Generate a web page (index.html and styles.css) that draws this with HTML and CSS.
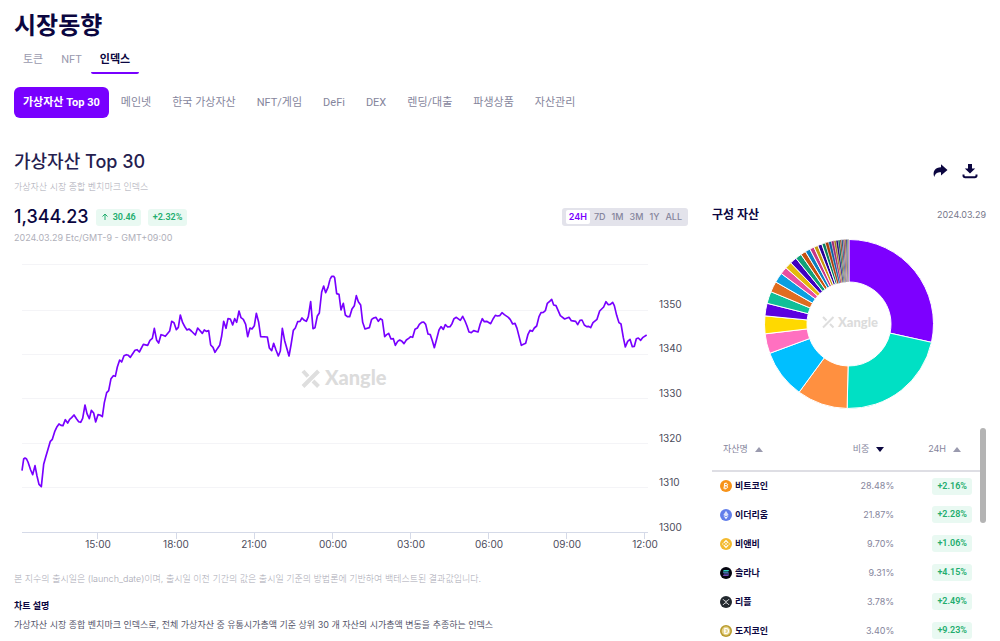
FILE: index.html
```html
<!DOCTYPE html>
<html lang="ko">
<head>
<meta charset="utf-8">
<meta name="viewport" content="width=device-width, initial-scale=1">
<title>시장동향</title>
<link rel="stylesheet" href="styles.css">
</head>
<body>
<header class="head">
  <h1 class="page-title">시장동향</h1>
  <nav class="tabs">
    <a class="tab" href="#token">토큰</a>
    <a class="tab" href="#nft">NFT</a>
    <a class="tab tab-active" href="#index">인덱스</a>
  </nav>
  <nav class="chips">
    <a class="chip chip-active" href="#top30">가상자산 Top 30</a>
    <a class="chip" href="#mainnet">메인넷</a>
    <a class="chip" href="#korea">한국 가상자산</a>
    <a class="chip" href="#game">NFT/게임</a>
    <a class="chip" href="#defi">DeFi</a>
    <a class="chip" href="#dex">DEX</a>
    <a class="chip" href="#lending">렌딩/대출</a>
    <a class="chip" href="#derivatives">파생상품</a>
    <a class="chip" href="#asset">자산관리</a>
  </nav>
</header>

<main class="content">
  <section class="index">
    <h2 class="index-title">가상자산 Top 30</h2>
    <p class="index-sub">가상자산 시장 종합 벤치마크 인덱스</p>
    <div class="price-row">
      <strong class="price">1,344.23</strong>
      <span class="badge"><svg class="up" viewBox="0 0 8 8"><path d="M4 7V1M1.500 3.500 4 1l2.500 2.500"/></svg>30.46</span>
      <span class="badge">+2.32%</span>
      <div class="ranges">
        <button class="range range-active">24H</button>
        <button class="range">7D</button>
        <button class="range">1M</button>
        <button class="range">3M</button>
        <button class="range">1Y</button>
        <button class="range">ALL</button>
      </div>
    </div>
    <p class="stamp">2024.03.29 Etc/GMT-9 - GMT+09:00</p>

    <svg class="chart" viewBox="0 0 674 306" role="img" aria-label="가상자산 Top 30 24H">
      <path class="grid" d="M8 14.5H634M8 60.5H634M8 104.5H634M8 148.5H634M8 193.5H634M8 237.5H634"/>
      <path class="axis" d="M8 282.5H634M83.5 282v7M162.5 282v7M240.5 282v7M318.5 282v7M396.5 282v7M474.5 282v7M552.5 282v7M630.5 282v7"/>
      <g class="mark" transform="translate(287 120)">
        <path class="mark-x" d="M2 1 7 6.500M12 11 17.500 16.500M17.500 1 2 16.500"/>
        <text class="mark-text" x="24" y="15">Xangle</text>
      </g>
      <svg width="674" height="306" viewBox="42 0 2022 918">
        <polyline class="line" points="66,662 71,627 75,624 79,626 84,636 92,660 98,674 105,647 111,678 117,703 124,710 131,643 138,618 144,598 151,574 157,568 164,545 170,532 177,522 183,526 189,527 196,509 203,519 209,508 215,503 222,495 230,507 236,515 242,517 248,505 255,465 261,491 268,506 274,481 281,489 287,516 294,494 300,495 307,500 313,458 320,428 326,422 333,386 340,377 346,379 352,351 359,330 365,336 372,317 379,314 385,316 391,322 405,301 411,299 418,306 430,283 443,286 450,271 457,265 463,235 470,271 476,279 483,254 489,256 496,259 509,243 515,214 522,218 529,239 535,232 541,195 548,218 555,231 561,240 567,237 574,243 586,255 593,234 607,250 613,240 619,244 626,242 632,285 639,292 645,307 652,296 659,286 665,258 671,214 678,235 684,206 691,207 698,225 704,206 710,217 717,183 723,203 730,208 737,223 743,260 750,234 756,237 763,227 769,190 776,217 782,260 802,261 808,294 815,302 821,280 828,300 835,318 841,303 847,235 854,272 867,318 873,285 880,241 886,234 893,215 900,214 906,204 913,211 919,214 925,200 932,155 939,236 945,233 952,198 958,189 965,126 971,108 977,128 984,112 990,88"/>
        <polyline class="line" transform="translate(990)" points="0,88 5,79 11,79 14,83 20,131 27,133 33,180 40,160 46,195 52,200 59,200 66,177 73,167 79,137 85,155 92,165 98,217 105,237 118,233 125,208 131,204 138,202 145,214 151,206 157,210 164,260 170,254 176,250 183,267 190,266 196,286 203,274 209,270 216,274 222,281 229,270 236,265 242,260 248,262 255,238 262,234 268,223 275,217 281,216 287,223 294,252 301,254 307,272 313,293 320,267 327,240 333,230 340,238 346,224 353,231 360,230 366,221 372,206 379,202 391,211 398,199 405,213 411,228 417,246 424,248 431,242 444,246 450,224 457,206 463,215 470,214 482,221 489,207 496,196 502,198 509,197 516,188 523,194 535,202 541,209 548,222 555,220 561,235 574,286 587,280 594,253 600,241 607,244 613,234 620,228 627,200 633,188 640,187 646,182 652,160 659,154 665,148 671,165 678,167 691,197 704,207 717,202 724,212 737,214 743,224 750,211 756,210 763,225 770,230 776,229 782,233 789,218 801,208 809,183 821,171 828,155 835,164 841,163 848,157 853,167 860,196 867,218 873,222 880,263 886,291 893,274 900,268 907,290 913,289 919,266 925,264 932,271 939,262 950,255"/>
      </svg>
      <g class="labels">
        <text x="645" y="58">1350</text><text x="645" y="102">1340</text><text x="645" y="147">1330</text><text x="645" y="192">1320</text><text x="645" y="236">1310</text><text x="645" y="281">1300</text>
      </g>
      <g class="labels labels-x">
        <text x="84" y="298">15:00</text><text x="162" y="298">18:00</text><text x="240" y="298">21:00</text><text x="319" y="298">00:00</text><text x="397" y="298">03:00</text><text x="475" y="298">06:00</text><text x="553" y="298">09:00</text><text x="631" y="298">12:00</text>
      </g>
    </svg>

    <p class="note">본 지수의 출시일은 (launch_date)이며, 출시일 이전 기간의 값은 출시일 기준의 방법론에 기반하여 백테스트된 결과값입니다.</p>
    <h3 class="about-title">차트 설명</h3>
    <p class="about">가상자산 시장 종합 벤치마크 인덱스로, 전체 가상자산 중 유통시가총액 기준 상위 30 개 자산의 시가총액 변동을 추종하는 인덱스</p>
  </section>

  <aside class="side">
    <div class="actions">
      <button class="action" aria-label="공유"><svg viewBox="0 0 16 16"><path d="M9 1.200 15.500 7 9 12.500V9.300C5.500 9.200 3.500 10.200 2.200 13.900.2 8 3.500 4.500 9 4.300Z"/></svg></button>
      <button class="action" aria-label="다운로드"><svg viewBox="0 0 16 16"><path d="M6 1h4v4.500h3.200L8 10.500 2.800 5.500H6Z"/><path class="tray" d="M1.500 11.500v1q0 1.700 1.700 1.700h9.600q1.700 0 1.700-1.700v-1"/></svg></button>
    </div>
    <div class="side-head">
      <h3 class="side-title">구성 자산</h3>
      <time class="side-date" datetime="2024-03-29">2024.03.29</time>
    </div>
    <svg class="donut" viewBox="0 0 170 170" role="img" aria-label="구성 자산 비중">
      <g id="slices" class="slices"></g>
      <g class="mark" transform="translate(58 77)">
        <path class="mark-x mark-x-small" d="M1 1 4.500 4.500M8 8 11.500 11.500M11.500 1 1 11.500"/>
        <text class="mark-text mark-text-small" x="16" y="11">Xangle</text>
      </g>
    </svg>
    <div class="assets">
      <table class="table">
        <thead>
          <tr>
            <th class="c-name"><button class="sort">자산명<span class="tri"></span></button></th>
            <th class="c-share"><button class="sort">비중<span class="tri tri-down"></span></button></th>
            <th class="c-day"><button class="sort">24H<span class="tri"></span></button></th>
          </tr>
        </thead>
        <tbody>
          <tr><td class="c-name"><span class="coin"><svg class="coin-icon" viewBox="0 0 12 12"><circle cx="6" cy="6" r="6" fill="#f7931a"/><path d="M4.700 3.200 4 8.600M4.500 3.400l2.200.3c1.500.3 1.200 2.200-.3 2.100L4.400 5.700l2.200.2c1.700.4 1.300 2.500-.5 2.400L3.800 8M6 2.500l-.2 1M5.300 8.500l-.2 1" fill="none" stroke="#fff"/></svg>비트코인</span></td><td class="c-share">28.48%</td><td class="c-day"><span class="badge">+2.16%</span></td></tr>
          <tr><td class="c-name"><span class="coin"><svg class="coin-icon" viewBox="0 0 12 12"><circle cx="6" cy="6" r="6" fill="#627eea"/><path d="M6 1.700 3.400 6.100 6 7.600l2.600-1.500Z" fill="#dfe5fb"/><path d="M3.400 6.800 6 10.300l2.600-3.500L6 8.300Z" fill="#fff"/></svg>이더리움</span></td><td class="c-share">21.87%</td><td class="c-day"><span class="badge">+2.28%</span></td></tr>
          <tr><td class="c-name"><span class="coin"><svg class="coin-icon" viewBox="0 0 12 12"><circle cx="6" cy="6" r="6" fill="#f3ba2f"/><path d="m3.800 4.900 2.200-2.200 2.200 2.200M3.800 7.100 6 9.300l2.200-2.200" fill="none" stroke="#fff" stroke-width="1.200"/><path d="m6 4.900 1.100 1.100L6 7.100 4.900 6ZM2.800 5.200l.8.800-.8.800L2 6ZM9.200 5.200l.8.800-.8.800-.8-.8Z" fill="#fff"/></svg>비앤비</span></td><td class="c-share">9.70%</td><td class="c-day"><span class="badge">+1.06%</span></td></tr>
          <tr><td class="c-name"><span class="coin"><svg class="coin-icon" viewBox="0 0 12 12"><circle cx="6" cy="6" r="6" fill="#050510"/><path d="M3.800 3.100h5.400L8.200 4.400H2.800Z" fill="#2fcfc0"/><path d="M2.800 5.300h5.400l1 1.300H3.800Z" fill="#5790e0"/><path d="M3.800 7.500h5.400L8.200 8.800H2.800Z" fill="#8c62e8"/></svg>솔라나</span></td><td class="c-share">9.31%</td><td class="c-day"><span class="badge">+4.15%</span></td></tr>
          <tr><td class="c-name"><span class="coin"><svg class="coin-icon" viewBox="0 0 12 12"><circle cx="6" cy="6" r="6" fill="#23292f"/><path d="m3 3.200 1.700 1.700q1.300 1.100 2.600 0L9 3.200M3 8.900l1.700-1.700q1.300-1.100 2.600 0L9 8.900" fill="none" stroke="#fff" stroke-width=".9"/></svg>리플</span></td><td class="c-share">3.78%</td><td class="c-day"><span class="badge">+2.49%</span></td></tr>
          <tr><td class="c-name"><span class="coin"><svg class="coin-icon" viewBox="0 0 12 12"><circle cx="6" cy="6" r="6" fill="#b99b2e"/><circle cx="6" cy="6" r="4.400" fill="#e6d38a"/><path d="M4.800 3.500h1.300c3.200 0 3.200 5 0 5H4.800ZM3.700 6h2.500" fill="none" stroke="#fff" stroke-width="1.100"/></svg>도지코인</span></td><td class="c-share">3.40%</td><td class="c-day"><span class="badge">+9.23%</span></td></tr>
        </tbody>
      </table>
      <span class="thumb"></span>
    </div>
  </aside>
</main>
<script src="script.js"></script>
</body>
</html>
```

FILE: styles.css
```css
* { box-sizing: border-box; }

body {
  margin: 0;
  padding: 9px 14px 0;
  overflow: hidden;
  background: #fff;
  color: #0b0640;
  font-family: Inter, "Noto Sans CJK KR", sans-serif;
  font-size: 9px;
  line-height: 16px;
}

h1, h2, h3, p { margin: 0; }
a { color: inherit; text-decoration: none; }
button {
  padding: 0;
  border: 0;
  background: none;
  color: inherit;
  font: inherit;
}

.page-title { font-size: 24px; line-height: 34px; font-weight: 700; }

.tabs, .chips { font-family: Roboto, "Noto Sans CJK KR", sans-serif; font-size: 11px; }
.tabs { display: flex; color: #9a9aae; }
.tab { padding: 9px 9px 4px; border-bottom: 2px solid transparent; line-height: 16px; }
.tab-active {
  border-bottom-color: #7800ff;
  border-radius: 2px;
  color: #0b0640;
  font-weight: 700;
}

.chips { display: flex; gap: 3px; margin-top: 13px; color: #85859c; }
.chip { padding: 8px 9px 7px; line-height: 16px; border-radius: 6px; white-space: nowrap; }
.chip-active { background: #7800ff; color: #fff; font-weight: 700; }

.content {
  display: grid;
  grid-template-columns: minmax(0, 1fr) 274px;
  gap: 24px;
  margin-top: 31px;
}

.index-title { font-size: 18px; line-height: 26px; font-weight: 500; color: #25204f; }
.index-sub { margin-top: 4px; color: #a9a9b4; font-weight: 300; }
.price-row { display: flex; align-items: center; gap: 7px; margin-top: 10px; }
.price { font-size: 18px; line-height: 24px; font-weight: 500; }

.badge {
  display: inline-flex;
  align-items: center;
  gap: 4px;
  padding: 0 5px;
  border-radius: 3px;
  background: #e9f9f2;
  color: #23ad6e;
  font-family: Roboto, sans-serif;
  font-weight: 600;
  line-height: 17px;
}
.up { width: 8px; height: 8px; fill: none; stroke: #23ad6e; }

.ranges {
  display: flex;
  gap: 2px;
  margin-left: auto;
  padding: 2px 4px;
  border-radius: 3px;
  background: #e3e3eb;
  color: #85859c;
  font-weight: 500;
}
.range { padding: 0 2px; border-radius: 2px; line-height: 14px; }
.range-active { padding: 0 3px; background: #fff; color: #7800ff; font-weight: 600; }

.stamp { margin-top: 1px; color: #b0b0ba; }

.chart { display: block; width: 100%; margin-top: 4px; }
.grid { fill: none; stroke: #f4f4f7; }
.axis { fill: none; stroke: #d5dae8; }
.line { fill: none; stroke: #7800ff; stroke-width: 5; stroke-linejoin: round; }
.labels { fill: #4c4c5c; font-size: 10px; }
.labels-x { text-anchor: middle; }
.mark-x { fill: none; stroke: #dedede; stroke-width: 4; }
.mark-x-small { stroke-width: 2; }
.mark-text { fill: #dcdcdc; font-family: Lato, sans-serif; font-size: 20px; font-weight: 900; }
.mark-text-small { font-size: 13px; }

.note { margin-top: 15px; color: #a9a9b4; font-weight: 300; }
.about-title { margin-top: 11px; font-size: 9px; font-weight: 700; }
.about { margin-top: 3px; color: #55556a; }

.actions { display: flex; justify-content: flex-end; gap: 14px; padding: 14px 8px 0 0; }
.action { width: 16px; height: 16px; }
.action svg { display: block; fill: #0b0640; }
.action .tray { fill: none; stroke: #0b0640; stroke-width: 2; }

.side-head { display: flex; align-items: center; justify-content: space-between; margin-top: 26px; }
.side-title { font-size: 12px; line-height: 20px; font-weight: 700; }
.side-date { color: #77778a; }

.donut { display: block; width: 170px; margin: 14px auto 0; }
.slices { stroke: #fff; stroke-width: 1; }
.slice-thin { stroke-width: 0.3; }

.assets { position: relative; margin-top: 19px; }
.table { width: 268px; border-collapse: collapse; table-layout: fixed; }
.table th { height: 43px; padding: 0; border-bottom: 2px solid #dedee4; color: #85859c; font-weight: 400; }
.table td { height: 29px; padding: 0; }
.table .c-name { width: 40%; padding-left: 8px; text-align: left; }
.table th.c-name { padding-left: 11px; }
.table .c-share { width: 28%; text-align: right; color: #85859c; }
.table th.c-share { padding-right: 10px; }
.table .c-day { text-align: right; padding-right: 8px; }
.table th.c-day { padding-right: 19px; }
.sort { display: inline-flex; align-items: center; gap: 7px; }
.tri {
  border: 4px solid transparent;
  border-top-width: 0;
  border-bottom: 5px solid #9a9aae;
}
.tri-down { border-top: 5px solid #0b0640; border-bottom-width: 0; }
.coin { display: flex; align-items: center; gap: 3px; font-weight: 700; }
.coin-icon { width: 12px; height: 12px; }
.thumb {
  position: absolute;
  top: 0;
  right: 0;
  width: 6px;
  height: 95px;
  border-radius: 3px;
  background: #b4b4b4;
}
```

FILE: script.js
```js
// Share of each asset, in percent, clockwise from the top.
const shares = [28.48, 21.87, 9.7, 9.31, 3.78, 3.4, 2.4, 2.3, 2.05, 1.9, 1.4, 1.3, 1.3, 1.2, 1, 0.95, 0.85, 0.8, 0.8,
  0.7, 0.6, 0.55, 0.5, 0.4, 0.4, 0.35, 0.3, 0.3, 0.3, 0.25, 0.25, 0.21, 0.1];
const first = ["#7d00ff", "#00e0c4", "#ff9040", "#00bfff", "#ff70c0", "#ffd900"];
const rest = ["#5b00e0", "#10bf98", "#e06c20", "#0a9fe0", "#e84fa0", "#e3b90c",
  "#4000c0", "#10a078", "#c85010", "#0a80c0", "#c83888", "#c89a10",
  "#2c0098", "#0a8060", "#a83c08", "#0a60a0", "#a02870", "#a07c10",
  "#200070", "#086048", "#803008", "#084878", "#782058", "#786010",
  "#200070", "#086048", "#803008"];

const at = (share, radius) => {
  const angle = share / 100 * 2 * Math.PI;
  return `${(85 + radius * Math.sin(angle)).toFixed(2)} ${(85 - radius * Math.cos(angle)).toFixed(2)}`;
};

let start = 0;
shares.forEach((share, i) => {
  const end = start + share;
  const path = document.createElementNS("http://www.w3.org/2000/svg", "path");
  path.setAttribute("d", `M${at(start, 84.5)}A84.5 84.5 0 0 1 ${at(end, 84.5)}L${at(end, 42)}A42 42 0 0 0 ${at(start, 42)}Z`);
  path.setAttribute("fill", i < 6 ? first[i] : rest[i - 6]);
  if (share < 0.7) path.setAttribute("class", "slice-thin");
  document.getElementById("slices").append(path);
  start = end;
});
```
